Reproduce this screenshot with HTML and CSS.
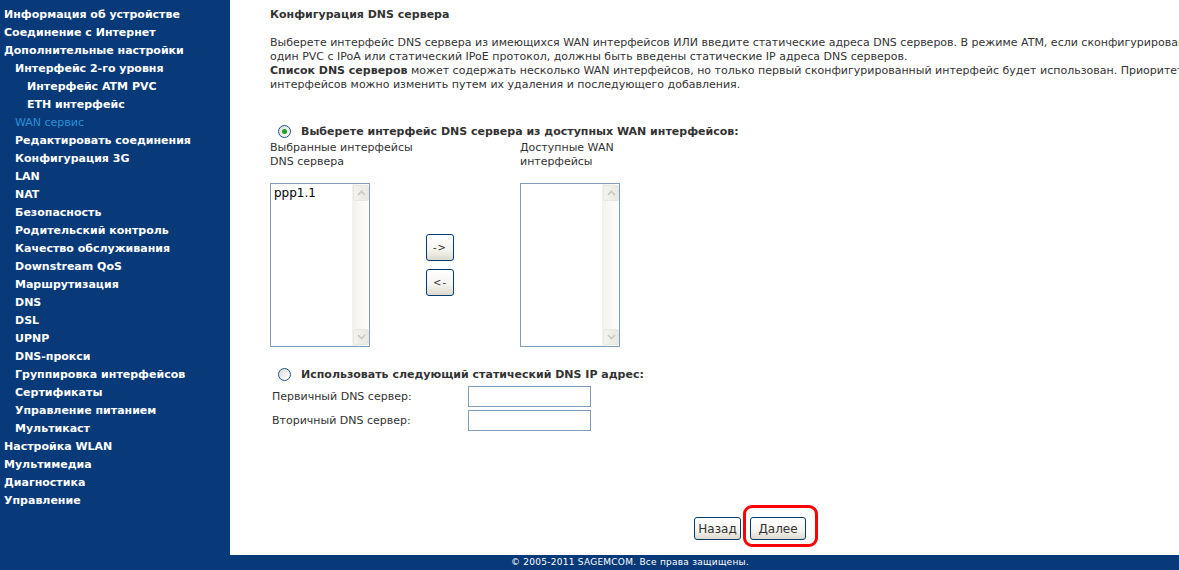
FILE: index.html
```html
<!DOCTYPE html>
<html lang="ru">
<head>
<meta charset="utf-8">
<title>Конфигурация DNS сервера</title>
<link rel="stylesheet" href="styles.css">
</head>
<body>
<div class="page">
  <nav class="sidebar">
    <a class="item l0">Информация об устройстве</a>
    <a class="item l0">Соединение с Интернет</a>
    <a class="item l0">Дополнительные настройки</a>
    <a class="item l1">Интерфейс 2-го уровня</a>
    <a class="item l2">Интерфейс ATM PVC</a>
    <a class="item l2">ETH интерфейс</a>
    <a class="item l1 active">WAN сервис</a>
    <a class="item l1">Редактировать соединения</a>
    <a class="item l1">Конфигурация 3G</a>
    <a class="item l1">LAN</a>
    <a class="item l1">NAT</a>
    <a class="item l1">Безопасность</a>
    <a class="item l1">Родительский контроль</a>
    <a class="item l1">Качество обслуживания</a>
    <a class="item l1">Downstream QoS</a>
    <a class="item l1">Маршрутизация</a>
    <a class="item l1">DNS</a>
    <a class="item l1">DSL</a>
    <a class="item l1">UPNP</a>
    <a class="item l1">DNS-прокси</a>
    <a class="item l1">Группировка интерфейсов</a>
    <a class="item l1">Сертификаты</a>
    <a class="item l1">Управление питанием</a>
    <a class="item l1">Мультикаст</a>
    <a class="item l0">Настройка WLAN</a>
    <a class="item l0">Мультимедиа</a>
    <a class="item l0">Диагностика</a>
    <a class="item l0">Управление</a>
  </nav>
  <main class="content">
    <h1 class="title">Конфигурация DNS сервера</h1>
    <div class="desc">
      <div class="line">Выберете интерфейс DNS сервера из имеющихся WAN интерфейсов ИЛИ введите статические адреса DNS серверов. В режиме ATM, если сконфигурирован только</div>
      <div class="line">один PVC с IPoA или статический IPoE протокол, должны быть введены статические IP адреса DNS серверов.</div>
      <div class="line"><b>Список DNS серверов</b> может содержать несколько WAN интерфейсов, но только первый сконфигурированный интерфейс будет использован. Приоритет</div>
      <div class="line">интерфейсов можно изменить путем их удаления и последующего добавления.</div>
    </div>

    <div class="radio-row first">
      <span class="radio checked"></span>
      <span class="radio-label">Выберете интерфейс DNS сервера из доступных WAN интерфейсов:</span>
    </div>

    <div class="captions">
      <div class="cap cap1">Выбранные интерфейсы<br>DNS сервера</div>
      <div class="cap">Доступные WAN<br>интерфейсы</div>
    </div>

    <div class="lists">
      <div class="listbox">
        <div class="options"><div class="opt">ppp1.1</div></div>
        <div class="scrollbar">
          <span class="sbtn up"><svg width="9" height="6" viewBox="0 0 9 6"><path d="M1 5 L4.5 1.5 L8 5" fill="none" stroke="#c9c8c2" stroke-width="1.6"/></svg></span>
          <span class="track"></span>
          <span class="sbtn down"><svg width="9" height="6" viewBox="0 0 9 6"><path d="M1 1 L4.5 4.5 L8 1" fill="none" stroke="#c9c8c2" stroke-width="1.6"/></svg></span>
        </div>
      </div>
      <div class="movers">
        <button class="btn mv">-&gt;</button>
        <button class="btn mv">&lt;-</button>
      </div>
      <div class="listbox">
        <div class="options"></div>
        <div class="scrollbar">
          <span class="sbtn up"><svg width="9" height="6" viewBox="0 0 9 6"><path d="M1 5 L4.5 1.5 L8 5" fill="none" stroke="#c9c8c2" stroke-width="1.6"/></svg></span>
          <span class="track"></span>
          <span class="sbtn down"><svg width="9" height="6" viewBox="0 0 9 6"><path d="M1 1 L4.5 4.5 L8 1" fill="none" stroke="#c9c8c2" stroke-width="1.6"/></svg></span>
        </div>
      </div>
    </div>

    <div class="radio-row second">
      <span class="radio"></span>
      <span class="radio-label">Использовать следующий статический DNS IP адрес:</span>
    </div>

    <div class="field-row r1">
      <span class="flabel">Первичный DNS сервер:</span>
      <span class="input"></span>
    </div>
    <div class="field-row r2">
      <span class="flabel">Вторичный DNS сервер:</span>
      <span class="input"></span>
    </div>

    <div class="actions">
      <button class="btn back">Назад</button>
      <span class="next-wrap">
        <button class="btn next">Далее</button>
        <span class="mark"></span>
      </span>
    </div>
  </main>
</div>
<footer class="footer">© 2005-2011 SAGEMCOM. Все права защищены.</footer>
</body>
</html>
```

FILE: styles.css
```css
* { box-sizing: border-box; }
html, body { margin: 0; padding: 0; }
body {
  width: 1179px;
  height: 570px;
  overflow: hidden;
  background: #ffffff;
  font-family: "DejaVu Sans", Verdana, sans-serif;
  font-size: 11px;
  color: #333333;
}
.page {
  display: flex;
  height: 555px;
}
.sidebar {
  width: 230px;
  flex: none;
  background: #083a7a;
  padding-top: 6px;
  display: flex;
  flex-direction: column;
}
.item {
  display: block;
  height: 18px;
  line-height: 18px;
  color: #ffffff;
  font-weight: bold;
  font-size: 11px;
  white-space: nowrap;
}
.l0 { padding-left: 4px; }
.l1 { padding-left: 15px; }
.l2 { padding-left: 27px; }
.item.active {
  color: #2b8fd6;
  font-weight: normal;
}
.content {
  flex: 1;
  min-width: 0;
  overflow: hidden;
  padding-left: 40px;
}
.title {
  margin: 8px 0 0;
  font-size: 11px;
  line-height: 14px;
  font-weight: bold;
  color: #333;
}
.desc {
  margin-top: 14px;
  line-height: 14px;
}
.line { white-space: nowrap; }
.desc b { font-weight: bold; }

.radio-row {
  display: flex;
  align-items: center;
  height: 16px;
}
.radio-row.first { margin-top: 31px; }
.radio-row.second { margin-top: 19px; }
.radio {
  width: 13px;
  height: 13px;
  border-radius: 50%;
  border: 1px solid #1c5180;
  background: linear-gradient(135deg, #dcdcd7, #ffffff);
  margin-left: 8px;
  margin-right: 10px;
  position: relative;
  flex: none;
}
.radio.checked::after {
  content: "";
  position: absolute;
  left: 3px;
  top: 3px;
  width: 5px;
  height: 5px;
  border-radius: 50%;
  background: #21a121;
}
.radio-label {
  font-weight: bold;
  white-space: nowrap;
}
.captions {
  display: flex;
  margin-top: 2px;
  line-height: 14px;
}
.cap1 { width: 250px; }
.lists {
  display: flex;
  align-items: center;
  margin-top: 14px;
}
.listbox {
  width: 100px;
  height: 164px;
  border: 1px solid #7f9db9;
  display: flex;
  background: #fff;
}
.options {
  flex: 1;
  padding: 2px 3px;
}
.opt {
  font-size: 12px;
  color: #000;
  line-height: 15px;
}
.scrollbar {
  width: 17px;
  flex: none;
  display: flex;
  flex-direction: column;
  background: linear-gradient(90deg, #f3f1ec, #fefefe);
}
.track { flex: 1; }
.sbtn {
  width: 16px;
  height: 16px;
  margin: 1px 0 1px 1px;
  border: 1px solid #e8e7e1;
  border-radius: 2px;
  background: linear-gradient(90deg, #f4f3ee, #e9e8e2);
  display: flex;
  align-items: center;
  justify-content: center;
}
.movers {
  display: flex;
  flex-direction: column;
  gap: 8px;
  margin-left: 56px;
  margin-right: 66px;
}
.btn {
  font-family: "DejaVu Sans", Verdana, sans-serif;
  font-size: 11px;
  color: #333;
  border: 1px solid #003c74;
  border-radius: 3px;
  background: linear-gradient(180deg, #ffffff 0%, #f4f3ee 60%, #dcd9cd 100%);
  padding: 0;
  cursor: default;
}
.btn.mv {
  width: 28px;
  height: 27px;
  font-size: 10px;
  letter-spacing: 1px;
}
.field-row {
  display: flex;
  align-items: center;
  height: 21px;
}
.field-row.r1 { margin-top: 4px; }
.field-row.r2 { margin-top: 3px; }
.flabel {
  width: 198px;
  padding-left: 2px;
  white-space: nowrap;
}
.input {
  width: 123px;
  height: 21px;
  border: 1px solid #7f9db9;
  background: #fff;
}
.actions {
  display: flex;
  margin-top: 86px;
  padding-left: 424px;
  gap: 9px;
}
.btn.back { width: 47px; height: 23px; font-size: 12px; }
.next-wrap { position: relative; display: inline-block; }
.btn.next { width: 56px; height: 23px; font-size: 12px; }
.mark {
  position: absolute;
  left: -7px;
  top: -12px;
  width: 75px;
  height: 42px;
  border: 3px solid #ff0000;
  border-radius: 9px;
}
.footer {
  height: 15px;
  background: #083a7a;
  color: #ffffff;
  font-size: 9px;
  line-height: 15px;
  letter-spacing: 0.25px;
  padding-left: 511px;
  white-space: nowrap;
}
```
